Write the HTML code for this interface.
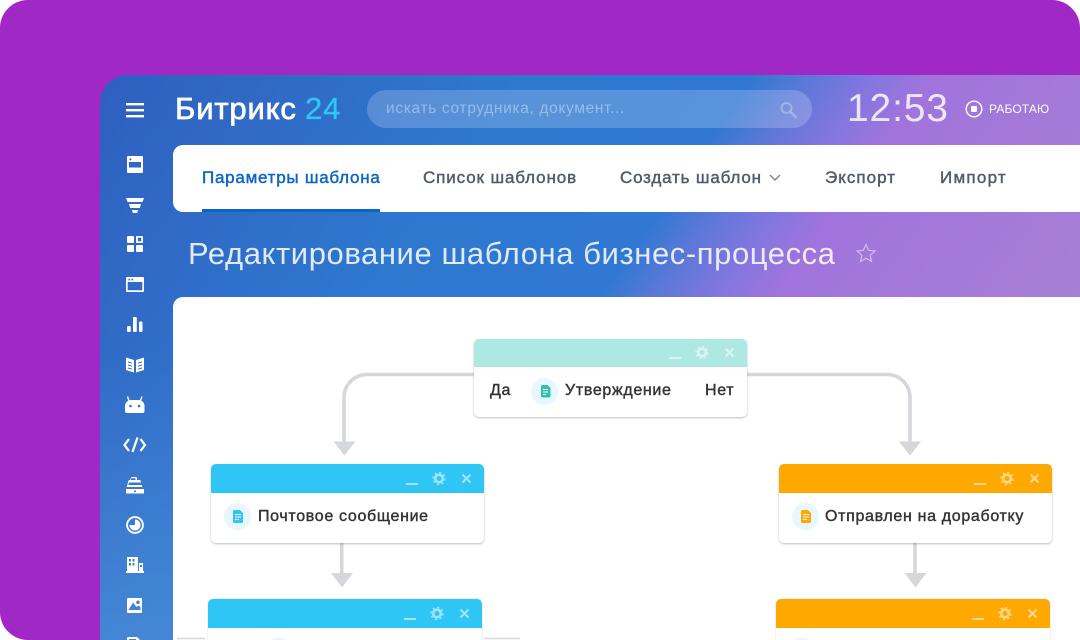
<!DOCTYPE html>
<html><head><meta charset="utf-8"><style>
html,body{margin:0;padding:0;background:#fff}
#p{position:relative;width:1080px;height:640px;overflow:hidden;font-family:"Liberation Sans",sans-serif;background:#a029c6;border-radius:28px 28px 0 28px}
#p div{position:absolute;white-space:nowrap}
#app{left:100px;top:75px;width:980px;height:565px;border-radius:28px 0 0 0;background:linear-gradient(125deg,#2d5fc0 0%,#3068c4 10%,#2e78d0 30%,#3078d2 46%,#5c78d8 50%,#8476e0 54.5%,#a074dc 58.500%,#a880d4 82%,#ac84d2 100%) 0 0/1000px 600px no-repeat;overflow:hidden}
#side{left:0;top:0;width:73px;height:565px;background:linear-gradient(180deg,rgba(255,255,255,0) 45%,rgba(255,255,255,.12) 100%) 0 0/73px 600px no-repeat}
.t{font-size:17px;color:#535c69;top:169px;line-height:18px;letter-spacing:.75px;-webkit-text-stroke:.45px currentColor}
.card{background:#fff;width:273px;border-radius:5px;box-shadow:0 1px 2px rgba(60,70,90,.35)}
.low{border-radius:5px 5px 0 0;box-shadow:0 0 1px rgba(60,70,90,.4)}
.hd{left:0;top:0;width:100%;height:29px;border-radius:5px 5px 0 0}
.lb{font-size:16px;line-height:18px;color:#333;letter-spacing:.67px;-webkit-text-stroke:.4px #333}
.ci{width:27px;height:27px;border-radius:50%;background:#e8f6fd}
</style></head><body><div id="p">
<div id="app"><div id="side"></div></div>

<!-- top bar -->
<div style="left:175px;top:92px;font-size:31px;line-height:34px;color:#fff;letter-spacing:.85px;-webkit-text-stroke:.7px #fff">Битрикс</div>
<div style="left:305px;top:92px;font-size:31px;line-height:34px;color:#2fc6f6;letter-spacing:.9px;-webkit-text-stroke:.3px #2fc6f6">24</div>
<div style="left:367px;top:90px;width:445px;height:38px;border-radius:19px;background:rgba(255,255,255,.2)"></div>
<div style="left:386px;top:100px;font-size:15.5px;line-height:18px;color:rgba(255,255,255,.38);letter-spacing:.66px">искать сотрудника, документ...</div>
<div style="left:847px;top:86px;font-size:39px;line-height:46px;color:rgba(255,255,255,.82);letter-spacing:.85px">12:53</div>
<div style="left:989px;top:102px;font-size:12px;line-height:14px;color:#fff;letter-spacing:.13px">РАБОТАЮ</div>

<!-- nav -->
<div style="left:173px;top:145px;width:907px;height:67px;background:#fff;border-radius:10px 0 0 10px"></div>
<div class="t" style="left:202px;color:#0b66c3">Параметры шаблона</div>
<div style="left:202px;top:209px;width:178px;height:3px;background:#0b66c3"></div>
<div class="t" style="left:423px;letter-spacing:.88px">Список шаблонов</div>
<div class="t" style="left:620px;letter-spacing:.82px">Создать шаблон</div>
<div class="t" style="left:825px;letter-spacing:1.03px">Экспорт</div>
<div class="t" style="left:940px;letter-spacing:1.25px">Импорт</div>

<!-- title -->
<div style="left:188px;top:236px;font-size:31px;line-height:36px;color:rgba(255,255,255,.85);letter-spacing:.58px">Редактирование шаблона бизнес-процесса</div>

<!-- content -->
<div style="left:173px;top:297px;width:907px;height:343px;background:#fff;border-radius:10px 0 0 0"></div>

<svg width="1080" height="640" viewBox="0 0 1080 640" style="position:absolute;left:0;top:0" fill="none">
<!-- magnifier -->
<g stroke="rgba(255,255,255,.28)" stroke-width="2"><circle cx="786.500" cy="108" r="5"/><path d="M790.500 112l6 6" stroke-width="2.500"/></g>
<!-- work -->
<circle cx="974" cy="109" r="7.800" stroke="#fff" stroke-width="1.400"/><rect x="971" y="106" width="6" height="6" rx="1" fill="#fff"/>
<!-- chevron, star -->
<path d="M770 175l5 5 5-5" stroke="#7b838e" stroke-width="1.400"/>
<path d="M866 244.500l2.600 5.800 6.300.7-4.700 4.200 1.300 6.200-5.500-3.200-5.500 3.200 1.300-6.200-4.700-4.200 6.300-.7z" stroke="rgba(255,255,255,.5)" stroke-width="1.200"/>

<!-- sidebar icons -->
<g fill="#fff">
<rect x="126" y="103" width="18" height="2.400"/><rect x="126" y="109" width="18" height="2.400"/><rect x="126" y="115" width="18" height="2.400"/>
<path fill-rule="evenodd" d="M128 156h14a1 1 0 0 1 1 1v15a1 1 0 0 1-1 1h-14a1 1 0 0 1-1-1v-15a1 1 0 0 1 1-1zm1 6v5.500h12v-5.500zm.5-3.500v1.700h1.800v-1.700z"/>
<path d="M126 198h18l-1.500 4h-15zM129 204h12l-1.200 4h-9.600zM132 210h6l-.8 3h-4.400z"/>
<rect x="127" y="236" width="7" height="7" rx="1"/><rect x="136" y="245" width="7" height="7" rx="1"/><rect x="127" y="245" width="7" height="7" rx="1"/>
<path fill-rule="evenodd" d="M137 236h5a1 1 0 0 1 1 1v5a1 1 0 0 1-1 1h-5a1 1 0 0 1-1-1v-5a1 1 0 0 1 1-1zm.8 1.800v3.400h3.400v-3.400z"/>
<path fill-rule="evenodd" d="M127 277h16a1 1 0 0 1 1 1v13a1 1 0 0 1-1 1h-16a1 1 0 0 1-1-1v-13a1 1 0 0 1 1-1zm.700 5v8.300h14.600v-8.300zm.8-3.300v1.700h1.700v-1.700zm3 0v1.700h1.700v-1.700z"/>
<rect x="127" y="326" width="3.800" height="6" rx="1"/><rect x="133" y="317" width="3.800" height="15" rx="1"/><rect x="139" y="321.500" width="3.500" height="10.500" rx="1"/>
<path d="M126 357.500l8 2.500v12.500l-8-2.500zM144 357.500l-8 2.500v12.500l8-2.500z"/>
</g>
<g stroke="#2f6bc6" stroke-width="1"><path d="M128 362l4 1.200M128 365l4 1.200M128 368l4 1.200M142 362l-4 1.200M142 365l-4 1.200M142 368l-4 1.200"/></g>
<rect x="125" y="400" width="19.500" height="13" rx="6" fill="#fff"/>
<path d="M125 408h19.500v3a2 2 0 0 1-2 2H127a2 2 0 0 1-2-2z" fill="#fff"/>
<g stroke="#fff" stroke-width="1.400"><path d="M129.500 402l-2-5.500M140 402l2-5.500"/></g>
<g fill="#3a70c8"><circle cx="130.500" cy="406" r="1.300"/><circle cx="139" cy="406" r="1.300"/></g>
<g stroke="#fff" stroke-width="2.200"><path d="M129 439l-4.500 6 4.500 6M140.500 439l4.500 6-4.500 6M137.500 437.500l-5 14.500"/></g>
<g fill="#fff">
<path fill-rule="evenodd" d="M130 477h6a1 1 0 0 1 1 1v2h2.500a1 1 0 0 1 1 .7l1.800 6.300h-15.600l1.800-6.300a1 1 0 0 1 1-.7h1.500v-2a1 1 0 0 1 1-1zm.5 1.200v1.800h5v-1.800zm-1.500 4.300l-.8 2.500h13.600l-.8-2.500z"/>
<path fill-rule="evenodd" d="M126 489h18v4.500h-18zm9 1.200a1 1 0 1 0 0 2 1 1 0 0 0 0-2z"/>
</g>
<circle cx="135" cy="525" r="7.900" stroke="#fff" stroke-width="1.900"/>
<path d="M135 519.500a5.500 5.500 0 1 1-5.500 5.500h5.500z" fill="#fff"/>
<g fill="#fff">
<path fill-rule="evenodd" d="M127 557h11v14h-11zm2 2v2.500h2v-2.500zm3.500 0v2.500h2v-2.500zm-3.500 4v2.500h2v-2.500zm3.500 0v2.500h2v-2.500z"/>
<path fill-rule="evenodd" d="M139 563h4v8h-4zm1 2v2h2v-2z"/>
<rect x="126" y="571" width="18" height="2"/>
<path fill-rule="evenodd" d="M128 598h13a1 1 0 0 1 1 1v13a1 1 0 0 1-1 1h-13a1 1 0 0 1-1-1v-13a1 1 0 0 1 1-1zm.5 12h12v-3l-2-1.500-2 1.500-3.500-4.500zM138 600.500a1.800 1.800 0 1 0 0 3.600 1.800 1.800 0 0 0 0-3.600z"/>
<path fill-rule="evenodd" d="M128 637h9l5 5v2h-15v-6a1 1 0 0 1 1-1zm1 2v3h7v-3z"/>
</g>

<!-- connectors -->
<g stroke="#d5d7db" stroke-width="3.600">
<path d="M474 374.500H367a23 23 0 0 0-23 23V442"/>
<path d="M747 374.500H887a23 23 0 0 1 23 23V442"/>
<path d="M341.700 543V575"/><path d="M915 543V575"/>
<path d="M177 638.500h28M484 638.500h36" stroke-width="1.500"/>
</g>
<g fill="#d5d7db">
<path d="M333.500 441.500h22l-11 14z"/><path d="M899 441.500h22l-11 14z"/>
<path d="M331 573h22l-11 14.500z"/><path d="M904.500 573h22l-11 14.500z"/>
</g>
</svg>

<!-- top card -->
<div class="card" style="left:474px;top:339px;height:78px"><div class="hd" style="background:#ade8e2;height:28px"></div></div>
<div class="lb" style="left:490px;top:382px">Да</div>
<div class="ci" style="left:531px;top:378px"></div>
<div class="lb" style="left:565px;top:382px">Утверждение</div>
<div class="lb" style="left:705px;top:382px">Нет</div>

<!-- left card -->
<div class="card" style="left:211px;top:464px;height:79px"><div class="hd" style="background:#2fc6f6"></div></div>
<div class="ci" style="left:224px;top:503px"></div>
<div class="lb" style="left:258px;top:508px">Почтовое сообщение</div>

<!-- right card -->
<div class="card" style="left:779px;top:464px;height:79px"><div class="hd" style="background:#ffa900"></div></div>
<div class="ci" style="left:792px;top:503px"></div>
<div class="lb" style="left:825px;top:508px">Отправлен на доработку</div>

<!-- lower cards -->
<div class="card low" style="left:208px;top:599px;width:274px;height:41px"><div class="hd" style="background:#2fc6f6"></div></div>
<div class="card low" style="left:776px;top:599px;width:274px;height:41px"><div class="hd" style="background:#ffa900"></div></div>

<svg width="1080" height="640" viewBox="0 0 1080 640" style="position:absolute;left:0;top:0" fill="none">
<circle cx="278" cy="651" r="13.500" fill="#e8f6fd"/>
<circle cx="802" cy="651" r="13.500" fill="#e8f6fd"/>
<!-- doc icons -->
<g><path d="M542.500 385h5l3 3v8a1.500 1.500 0 0 1-1.500 1.500h-6.500a1.500 1.500 0 0 1-1.500-1.500v-9.500a1.500 1.500 0 0 1 1.500-1.500z" fill="#2fc0b0"/><path d="M543 389.500h5M543 392h5M543 394.500h3" stroke="#fff" stroke-width="1.100"/></g>
<g><path d="M234.500 510h5.500l3 3v8.500a1.500 1.500 0 0 1-1.500 1.500h-7a1.500 1.500 0 0 1-1.500-1.500v-10a1.500 1.500 0 0 1 1.500-1.500z" fill="#2fc6f6"/><path d="M235 514.500h6M235 517h6M235 519.500h4" stroke="#fff" stroke-width="1.100"/></g>
<g><path d="M802.500 510h5.500l3 3v8.500a1.500 1.500 0 0 1-1.500 1.500h-7a1.500 1.500 0 0 1-1.500-1.500v-10a1.500 1.500 0 0 1 1.500-1.500z" fill="#ffa900"/><path d="M803 514.500h6M803 517h6M803 519.500h4" stroke="#fff" stroke-width="1.100"/></g>

<!-- header controls -->
<g stroke="rgba(255,255,255,.55)">
<path d="M669 358h12" stroke-width="2"/>
<circle cx="702" cy="352.500" r="3.800" stroke-width="2.600"/><circle cx="702" cy="352.500" r="6" stroke-width="1.400" stroke-dasharray="2.100 2.610"/>
<path d="M725.500 348.500l8 8M733.500 348.500l-8 8" stroke-width="2"/>
</g>
<g stroke="rgba(255,255,255,.55)">
<path d="M406 484h12" stroke-width="2"/>
<circle cx="439" cy="478.500" r="3.800" stroke-width="2.600"/><circle cx="439" cy="478.500" r="6" stroke-width="1.400" stroke-dasharray="2.100 2.610"/>
<path d="M462.500 474.500l8 8M470.500 474.500l-8 8" stroke-width="2"/>
</g>
<g stroke="rgba(255,255,255,.55)">
<path d="M974 484h12" stroke-width="2"/>
<circle cx="1007" cy="478.500" r="3.800" stroke-width="2.600"/><circle cx="1007" cy="478.500" r="6" stroke-width="1.400" stroke-dasharray="2.100 2.610"/>
<path d="M1030.500 474.500l8 8M1038.500 474.500l-8 8" stroke-width="2"/>
</g>
<g stroke="rgba(255,255,255,.55)">
<path d="M404 619h12" stroke-width="2"/>
<circle cx="437" cy="613.500" r="3.800" stroke-width="2.600"/><circle cx="437" cy="613.500" r="6" stroke-width="1.400" stroke-dasharray="2.100 2.610"/>
<path d="M460.500 609.500l8 8M468.500 609.500l-8 8" stroke-width="2"/>
</g>
<g stroke="rgba(255,255,255,.55)">
<path d="M972 619h12" stroke-width="2"/>
<circle cx="1005" cy="613.500" r="3.800" stroke-width="2.600"/><circle cx="1005" cy="613.500" r="6" stroke-width="1.400" stroke-dasharray="2.100 2.610"/>
<path d="M1028.500 609.500l8 8M1036.500 609.500l-8 8" stroke-width="2"/>
</g>
</svg>
</div></body></html>
